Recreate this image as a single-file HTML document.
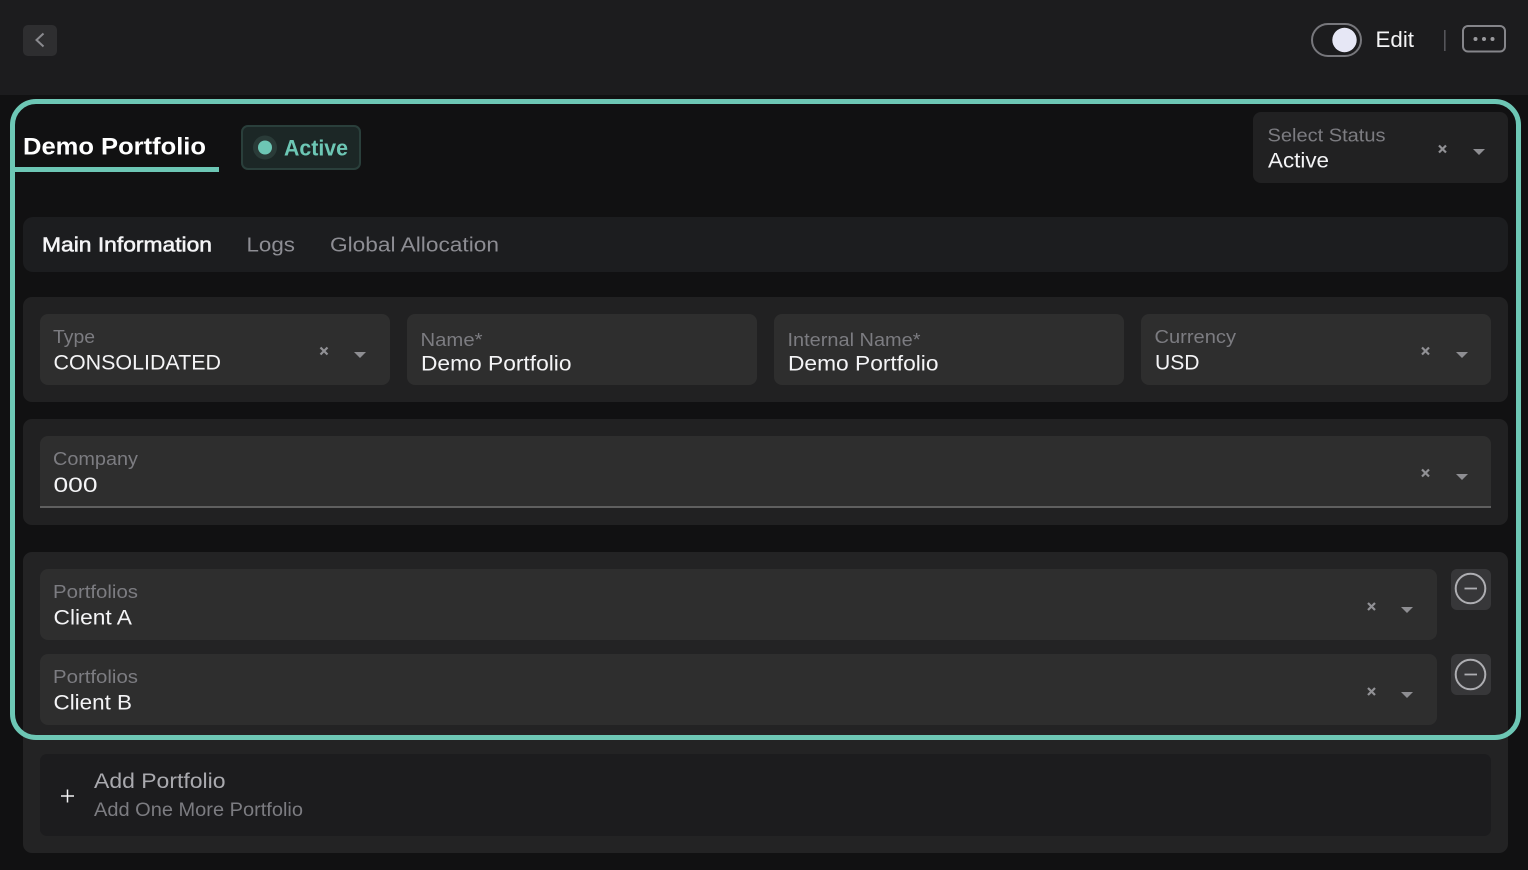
<!DOCTYPE html>
<html lang="en"><head><meta charset="utf-8"><title>Demo Portfolio</title>
<style>
html,body{margin:0;padding:0;background:#111112;width:1528px;height:870px;overflow:hidden}
body{position:relative;font-family:"Liberation Sans",sans-serif}
.b{position:absolute;box-sizing:border-box}
.hd{left:0;top:0;width:1528px;height:95px;background:#1c1c1e}
.sec{background:#212122;border-radius:9px}
.f{background:#2e2e2e;border-radius:8px}
svg{position:absolute;left:0;top:0}
text{font-family:"Liberation Sans",sans-serif}
.l{font-size:18.5px;fill:#7c7c81}
.v{font-size:21px;fill:#f4f4f6}
.x{stroke:#919195;stroke-width:2.2;fill:none}
.c{fill:#8e8e92}
</style></head>
<body>
<div class="b hd"></div>
<div class="b" style="left:23px;top:25px;width:34px;height:31px;background:#2e2e30;border-radius:5px"></div>
<div class="b" style="left:1253px;top:112px;width:255px;height:71px;background:#212122;border-radius:8px"></div>
<div class="b" style="left:241px;top:125px;width:120px;height:45px;background:#1c2726;border:2px solid #2a3f3b;border-radius:7px"></div>
<div class="b" style="left:23px;top:217px;width:1485px;height:55px;background:#1c1d1f;border-radius:10px"></div>

<div class="b sec" style="left:23px;top:297px;width:1485px;height:105px"></div>
<div class="b f" style="left:40px;top:314px;width:350px;height:71px"></div>
<div class="b f" style="left:407px;top:314px;width:350px;height:71px"></div>
<div class="b f" style="left:774px;top:314px;width:350px;height:71px"></div>
<div class="b f" style="left:1141px;top:314px;width:350px;height:71px"></div>

<div class="b sec" style="left:23px;top:419px;width:1485px;height:106px"></div>
<div class="b f" style="left:40px;top:436px;width:1451px;height:72px;border-radius:8px 8px 0 0;border-bottom:2px solid #5f5f5f"></div>

<div class="b sec" style="left:23px;top:552px;width:1485px;height:301px;background:#232324"></div>
<div class="b f" style="left:40px;top:569px;width:1397px;height:71px"></div>
<div class="b f" style="left:40px;top:654px;width:1397px;height:71px"></div>
<div class="b" style="left:1451px;top:569px;width:40px;height:41px;background:#373739;border-radius:6px"></div>
<div class="b" style="left:1451px;top:654px;width:40px;height:41px;background:#373739;border-radius:6px"></div>
<div class="b" style="left:40px;top:754px;width:1451px;height:82px;background:#1c1c1e;border-radius:7px"></div>

<div class="b" style="left:10px;top:99px;width:1511px;height:641px;border:5px solid #6dc7b5;border-radius:26px"></div>
<div class="b" style="left:15px;top:167px;width:204px;height:5px;background:#6dc7b5"></div>

<svg width="1528" height="870" viewBox="0 0 1528 870">
<!-- header -->
<path d="M43.5 33.5 36.5 40l7 6.5" fill="none" stroke="#8a8a8f" stroke-width="2"/>
<rect x="1312" y="24" width="49" height="32" rx="16" fill="none" stroke="#77777c" stroke-width="2"/>
<circle cx="1344.5" cy="40" r="12.2" fill="#e6e7f5"/>
<text x="1375.5" y="47" font-size="22" fill="#f4f4f6" textLength="38.5" lengthAdjust="spacingAndGlyphs">Edit</text>
<rect x="1444" y="30" width="1.6" height="21" fill="#55555a"/>
<rect x="1463" y="26" width="42" height="25.5" rx="5" fill="none" stroke="#85858a" stroke-width="2"/>
<circle cx="1475.5" cy="39" r="2" fill="#9a9a9e"/><circle cx="1484" cy="39" r="2" fill="#9a9a9e"/><circle cx="1492.5" cy="39" r="2" fill="#9a9a9e"/>

<!-- title -->
<text x="23" y="154.5" font-size="24.5" font-weight="700" fill="#fff" textLength="183" lengthAdjust="spacingAndGlyphs">Demo Portfolio</text>
<circle cx="265" cy="147.5" r="12" fill="#2a3b38"/><circle cx="265" cy="147.5" r="7" fill="#6dc7b5"/>
<text x="284" y="155.5" font-size="22" font-weight="700" fill="#6dc7b5" textLength="64" lengthAdjust="spacingAndGlyphs">Active</text>
<text class="l" x="1267.5" y="141.5" textLength="118" lengthAdjust="spacingAndGlyphs">Select Status</text>
<text class="v" x="1268" y="167.5" textLength="61" lengthAdjust="spacingAndGlyphs">Active</text>
<path class="x" d="M1439 145.5l7 7m0-7l-7 7"/>
<path class="c" d="M1473 149h12l-6 6z"/>

<!-- tabs -->
<text x="42" y="251.5" font-size="20.5" fill="#f4f4f6" stroke="#f4f4f6" stroke-width=".55" textLength="170" lengthAdjust="spacingAndGlyphs">Main Information</text>
<text x="246.5" y="251.5" font-size="20.5" fill="#8d8d93" textLength="48.5" lengthAdjust="spacingAndGlyphs">Logs</text>
<text x="330" y="251.5" font-size="20.5" fill="#8d8d93" textLength="169" lengthAdjust="spacingAndGlyphs">Global Allocation</text>

<!-- row 1 -->
<text class="l" x="53" y="343" textLength="42" lengthAdjust="spacingAndGlyphs">Type</text>
<text class="v" x="53.5" y="369.5" textLength="167.5" lengthAdjust="spacingAndGlyphs">CONSOLIDATED</text>
<path class="x" d="M320.5 347.5l7 7m0-7l-7 7"/>
<path class="c" d="M354 352h12l-6 6z"/>
<text class="l" x="420.5" y="346" textLength="62" lengthAdjust="spacingAndGlyphs">Name*</text>
<text class="v" x="421" y="370.5" textLength="150.5" lengthAdjust="spacingAndGlyphs">Demo Portfolio</text>
<text class="l" x="787.5" y="346" textLength="133" lengthAdjust="spacingAndGlyphs">Internal Name*</text>
<text class="v" x="788" y="370.5" textLength="150.5" lengthAdjust="spacingAndGlyphs">Demo Portfolio</text>
<text class="l" x="1154.5" y="343" textLength="81.5" lengthAdjust="spacingAndGlyphs">Currency</text>
<text class="v" x="1155" y="369.5" textLength="44.5" lengthAdjust="spacingAndGlyphs">USD</text>
<path class="x" d="M1422 347.5l7 7m0-7l-7 7"/>
<path class="c" d="M1456 352h12l-6 6z"/>

<!-- row 2 -->
<text class="l" x="53" y="465" textLength="85" lengthAdjust="spacingAndGlyphs">Company</text>
<text class="v" x="53.5" y="492" textLength="44" lengthAdjust="spacingAndGlyphs">000</text>
<path class="x" d="M1422 469.5l7 7m0-7l-7 7"/>
<path class="c" d="M1456 474h12l-6 6z"/>

<!-- row 3 -->
<text class="l" x="53" y="598" textLength="85" lengthAdjust="spacingAndGlyphs">Portfolios</text>
<text class="v" x="53.5" y="624.5" textLength="78.5" lengthAdjust="spacingAndGlyphs">Client A</text>
<path class="x" d="M1368 603l7 7m0-7l-7 7"/>
<path class="c" d="M1401 607h12l-6 6z"/>
<circle cx="1470.5" cy="588.5" r="14.8" fill="none" stroke="#aeaeb2" stroke-width="2"/>
<path d="M1464.5 588.5h12.5" stroke="#aeaeb2" stroke-width="1.8"/>

<text class="l" x="53" y="683" textLength="85" lengthAdjust="spacingAndGlyphs">Portfolios</text>
<text class="v" x="53.5" y="709.5" textLength="78.5" lengthAdjust="spacingAndGlyphs">Client B</text>
<path class="x" d="M1368 688l7 7m0-7l-7 7"/>
<path class="c" d="M1401 692h12l-6 6z"/>
<circle cx="1470.5" cy="674.5" r="14.8" fill="none" stroke="#aeaeb2" stroke-width="2"/>
<path d="M1464.5 674.5h12.5" stroke="#aeaeb2" stroke-width="1.8"/>

<!-- add -->
<path d="M67.5 789.5v13M61 796h13" stroke="#f0f0f2" stroke-width="1.5"/>
<text x="94" y="788" font-size="21.5" fill="#a9a9ae" textLength="131.5" lengthAdjust="spacingAndGlyphs">Add Portfolio</text>
<text x="94" y="816" font-size="19.5" fill="#7c7c81" textLength="209" lengthAdjust="spacingAndGlyphs">Add One More Portfolio</text>
</svg>
</body></html>
